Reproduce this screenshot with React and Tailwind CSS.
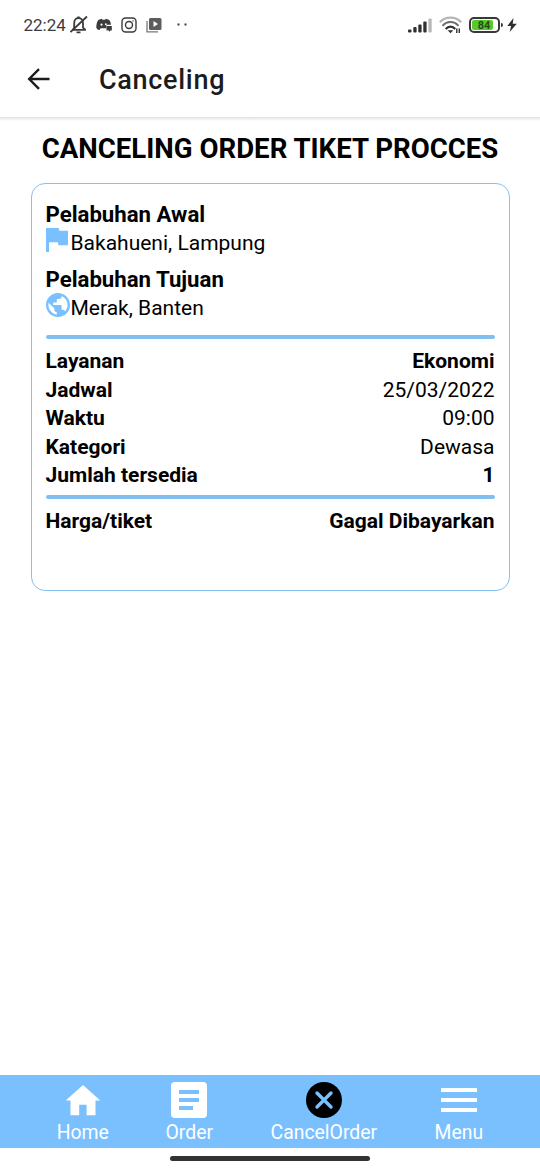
import React from 'react';

const details = [
  { label: 'Layanan', value: 'Ekonomi', bold: true },
  { label: 'Jadwal', value: '25/03/2022' },
  { label: 'Waktu', value: '09:00' },
  { label: 'Kategori', value: 'Dewasa' },
  { label: 'Jumlah tersedia', value: '1', bold: true },
];

function StatusBar() {
  return (
    <div className="flex h-[49px] shrink-0 items-center pl-[23.500px] pr-[23px] text-[#3c3c3c]">
      <span className="w-[46.500px] whitespace-nowrap text-[17px] leading-5">22:24</span>
      <svg className="h-5 w-[18px]" viewBox="0 0 18 20" fill="none" stroke="#3c3c3c" strokeWidth="1.800">
        <path d="M3 14.800l1.200-2.200V8.200C4.200 5 6 3 8.500 3S13 5 13 8.200v4.400l2 1.800v.4z" />
        <path d="M7.300 2.400h2.400M6.500 17.300h4" />
        <path d="M17 1.500L.5 17" />
      </svg>
      <svg className="ml-2 h-4 w-[17px]" viewBox="0 0 17 16">
        <path fill="#3c3c3c" d="M.3 10.500C.4 6.500 1.500 3.300 2.800 2.700l3-.9.7 1h2.600l.7-1 3 .9c1.200.6 1.900 2.700 2.200 5H10.300v3.500H4.700L3.500 13c-1.500 0-2.700-.8-3.200-2.500z" />
        <ellipse cx="5.500" cy="7.600" rx="1" ry="1.200" fill="white" />
        <ellipse cx="9.800" cy="7.200" rx=".9" ry="1" fill="white" />
        <path fill="#3c3c3c" d="M10.500 9h5.300v4.500h-1.500L13 15v-1.500h-2.500z" />
      </svg>
      <svg className="ml-[8px] h-4 w-4" viewBox="0 0 16 16" fill="none" stroke="#3c3c3c" strokeWidth="1.400">
        <rect x="1" y="1" width="14" height="14" rx="3.500" />
        <circle cx="8" cy="8" r="3.500" />
        <circle cx="12" cy="4" r=".7" fill="#3c3c3c" stroke="none" />
      </svg>
      <svg className="ml-[9px] h-4 w-4" viewBox="0 0 16 16">
        <path d="M1 4v10.800h11" fill="none" stroke="#777" strokeWidth="1.300" />
        <rect x="3" y="1" width="12.500" height="12" rx="1.500" fill="#5c5c5c" />
        <path d="M7.500 4v6l4.500-3z" fill="white" />
      </svg>
      <svg className="ml-[15px] h-4 w-3" viewBox="0 0 12 16" fill="#3c3c3c">
        <rect x=".5" y="6.500" width="2" height="2" />
        <rect x="7.500" y="6.500" width="2" height="2" />
      </svg>

      <svg className="ml-auto h-4 w-6" viewBox="0 0 24 16" fill="#303030">
        <rect x="0" y="12.500" width="3.500" height="3" rx="1" />
        <rect x="5.300" y="10" width="3.300" height="5.500" rx="1" />
        <rect x="10.300" y="7.500" width="3.300" height="8" rx="1" />
        <rect x="15.300" y="4.500" width="3.300" height="11" rx="1" />
        <rect x="20.400" y="1.500" width="3.300" height="14" rx="1" fill="#b8b8b8" />
      </svg>
      <svg className="ml-[7px] h-[18px] w-[23px]" viewBox="0 0 23 18" fill="none">
        <path d="M.8 6.300C6.500 0 16.500 0 22.200 6.300" stroke="#b5b5b5" strokeWidth="2.200" />
        <path d="M3.500 9.800c4.500-5 11.500-5 16 0" stroke="#6c6c6c" strokeWidth="1.900" />
        <path d="M6.700 13c3-3.300 6.600-3.300 9.600 0" stroke="#303030" strokeWidth="2.200" />
        <path d="M8.700 14.300h5.600l-2.800 2.900z" fill="#303030" />
        <path d="M17.800 12.500v4.500M20.300 12.500v4.500" stroke="#303030" strokeWidth="1.400" />
      </svg>
      <div className="ml-[7px] flex h-4 w-[31px] items-center rounded-[5px] border-2 border-[#383838] p-px">
        <div className="flex h-full w-[21px] items-center justify-center rounded-[2px] bg-[#57c92b] pl-[3px] pt-px font-[Roboto] text-[11px] font-bold leading-none text-[#244d16]">84</div>
      </div>
      <div className="ml-px h-1 w-[2px] rounded-r bg-[#383838]" />
      <svg className="ml-[4px] h-[14px] w-[10px]" viewBox="0 0 10 14">
        <path d="M6.500 0L.3 8h3.800L2.700 14 9.800 5.800H5.700z" fill="#303030" />
      </svg>
    </div>
  );
}

function Header() {
  return (
    <header className="flex h-[68px] shrink-0 items-center pb-[7px] pl-[27px]">
      <svg className="mt-[-2px] h-[22px] w-[23px]" viewBox="0 0 23 22" fill="none" stroke="#1c1c1e" strokeWidth="2.400">
        <path d="M22.500 11H2.500M12 1.200L2.200 11l9.800 9.800" />
      </svg>
      <h1 className="ml-[49px] text-[27px] font-medium leading-8 tracking-[0.7px] text-[#1c1c1e]">Canceling</h1>
    </header>
  );
}

function FlagIcon() {
  return (
    <svg className="mb-[8px] ml-[0.700px] h-6 w-[22px]" viewBox="0 0 22 24" fill="#7ac0ff">
      <path d="M0 0h12.700l.6 2.700H22v14.500h-9.500l-.6-2.900H3V24H0z" />
    </svg>
  );
}

function GlobeIcon() {
  return (
    <svg className="mb-[7px] h-6 w-6" viewBox="2 2 20 20" fill="#7ac0ff">
      <path d="M12 2C6.480 2 2 6.480 2 12s4.480 10 10 10 10-4.480 10-10S17.520 2 12 2zm-1 17.930c-3.950-.49-7-3.850-7-7.930 0-.62.080-1.210.210-1.790L9 15v1c0 1.100.9 2 2 2v1.930zm6.900-2.540c-.26-.81-1-1.390-1.900-1.390h-1v-3c0-.55-.45-1-1-1H8v-2h2c.55 0 1-.45 1-1V7h2c1.100 0 2-.9 2-2v-.41c2.930 1.190 5 4.060 5 7.410 0 2.080-.8 3.970-2.100 5.390z" />
    </svg>
  );
}

function Port({ title, place, icon }) {
  return (
    <section className="h-[65px]">
      <h3 className="h-[29px] text-[22.200px] font-bold">{title}</h3>
      <div className="flex h-[29px] items-center">
        <div className="w-[25px] shrink-0">{icon}</div>
        <span>{place}</span>
      </div>
    </section>
  );
}

function Divider() {
  return <div className="h-1 rounded-full bg-[#80bff0]" />;
}

function Row({ label, value, bold }) {
  return (
    <div className="flex h-[28.500px] justify-between">
      <span className="font-bold">{label}</span>
      <span className={bold ? 'font-bold' : 'font-normal'}>{value}</span>
    </div>
  );
}

const tabs = [
  {
    label: 'Home',
    width: 'w-[106px]',
    icon: (
      <svg className="h-9 w-9" viewBox="0 0 36 36" fill="white">
        <path d="M18 3L.7 18.500h4.800v14.800h8.700V22.700h7.400v10.600h8.900V18.500h4.800z" />
      </svg>
    ),
  },
  {
    label: 'Order',
    width: 'w-[107px]',
    icon: (
      <svg className="h-9 w-9" viewBox="0 0 36 36">
        <rect width="36" height="36" rx="4" fill="white" />
        <path d="M8 8h20v4H8zM8 16h20v4H8zM8 24h14v4H8z" fill="#7ac0ff" />
      </svg>
    ),
  },
  {
    label: 'CancelOrder',
    width: 'w-[162px]',
    icon: (
      <svg className="h-9 w-9" viewBox="0 0 36 36">
        <circle cx="18" cy="18" r="18" fill="black" />
        <path d="M11 11l14 14M25 11L11 25" stroke="#7ac0ff" strokeWidth="3.400" strokeLinecap="round" />
      </svg>
    ),
  },
  {
    label: 'Menu',
    width: 'w-[108px]',
    icon: (
      <svg className="h-9 w-9" viewBox="0 0 36 36" fill="white">
        <path d="M0 6h36v4H0zM0 16h36v4H0zM0 26h36v4H0z" />
      </svg>
    ),
  },
];

export default function App() {
  return (
    <div className="flex h-[1170px] w-[540px] flex-col overflow-hidden bg-white font-[Roboto,sans-serif] text-black">
      <StatusBar />
      <Header />
      <div className="h-1 shrink-0 bg-linear-to-b from-[#e2e2e2] to-white" />

      <main className="flex-1">
        <h2 className="mt-[12px] whitespace-nowrap text-center text-[27.600px] font-bold leading-8">CANCELING ORDER TIKET PROCCES</h2>
        <div className="mx-[30.500px] mt-[18px] h-[408px] rounded-[14px] border-[1.500px] border-[#86c0ee] px-[14px] pt-[16px] text-[21px] leading-[29px]">
          <Port title="Pelabuhan Awal" place="Bakahueni, Lampung" icon={<FlagIcon />} />
          <Port title="Pelabuhan Tujuan" place="Merak, Banten" icon={<GlobeIcon />} />
          <div className="mt-[5px]">
            <Divider />
          </div>
          <div className="h-[156px] pt-[8px]">
            {details.map((item) => (
              <Row key={item.label} {...item} />
            ))}
          </div>
          <Divider />
          <div className="pt-[8px]">
            <Row label="Harga/tiket" value="Gagal Dibayarkan" bold />
          </div>
        </div>
      </main>

      <nav className="flex h-[73px] shrink-0 bg-[#7ac0ff] pl-[29.800px] text-[19.400px] leading-6 text-white">
        {tabs.map((tab) => (
          <div key={tab.label} className={`flex shrink-0 flex-col items-center pt-[7px] ${tab.width}`}>
            {tab.icon}
            <span className="mt-[3px]">{tab.label}</span>
          </div>
        ))}
      </nav>
      <div className="flex h-[22px] shrink-0 justify-center pt-[8px]">
        <div className="h-[5px] w-[200px] rounded-full bg-[#333333]" />
      </div>
    </div>
  );
}
